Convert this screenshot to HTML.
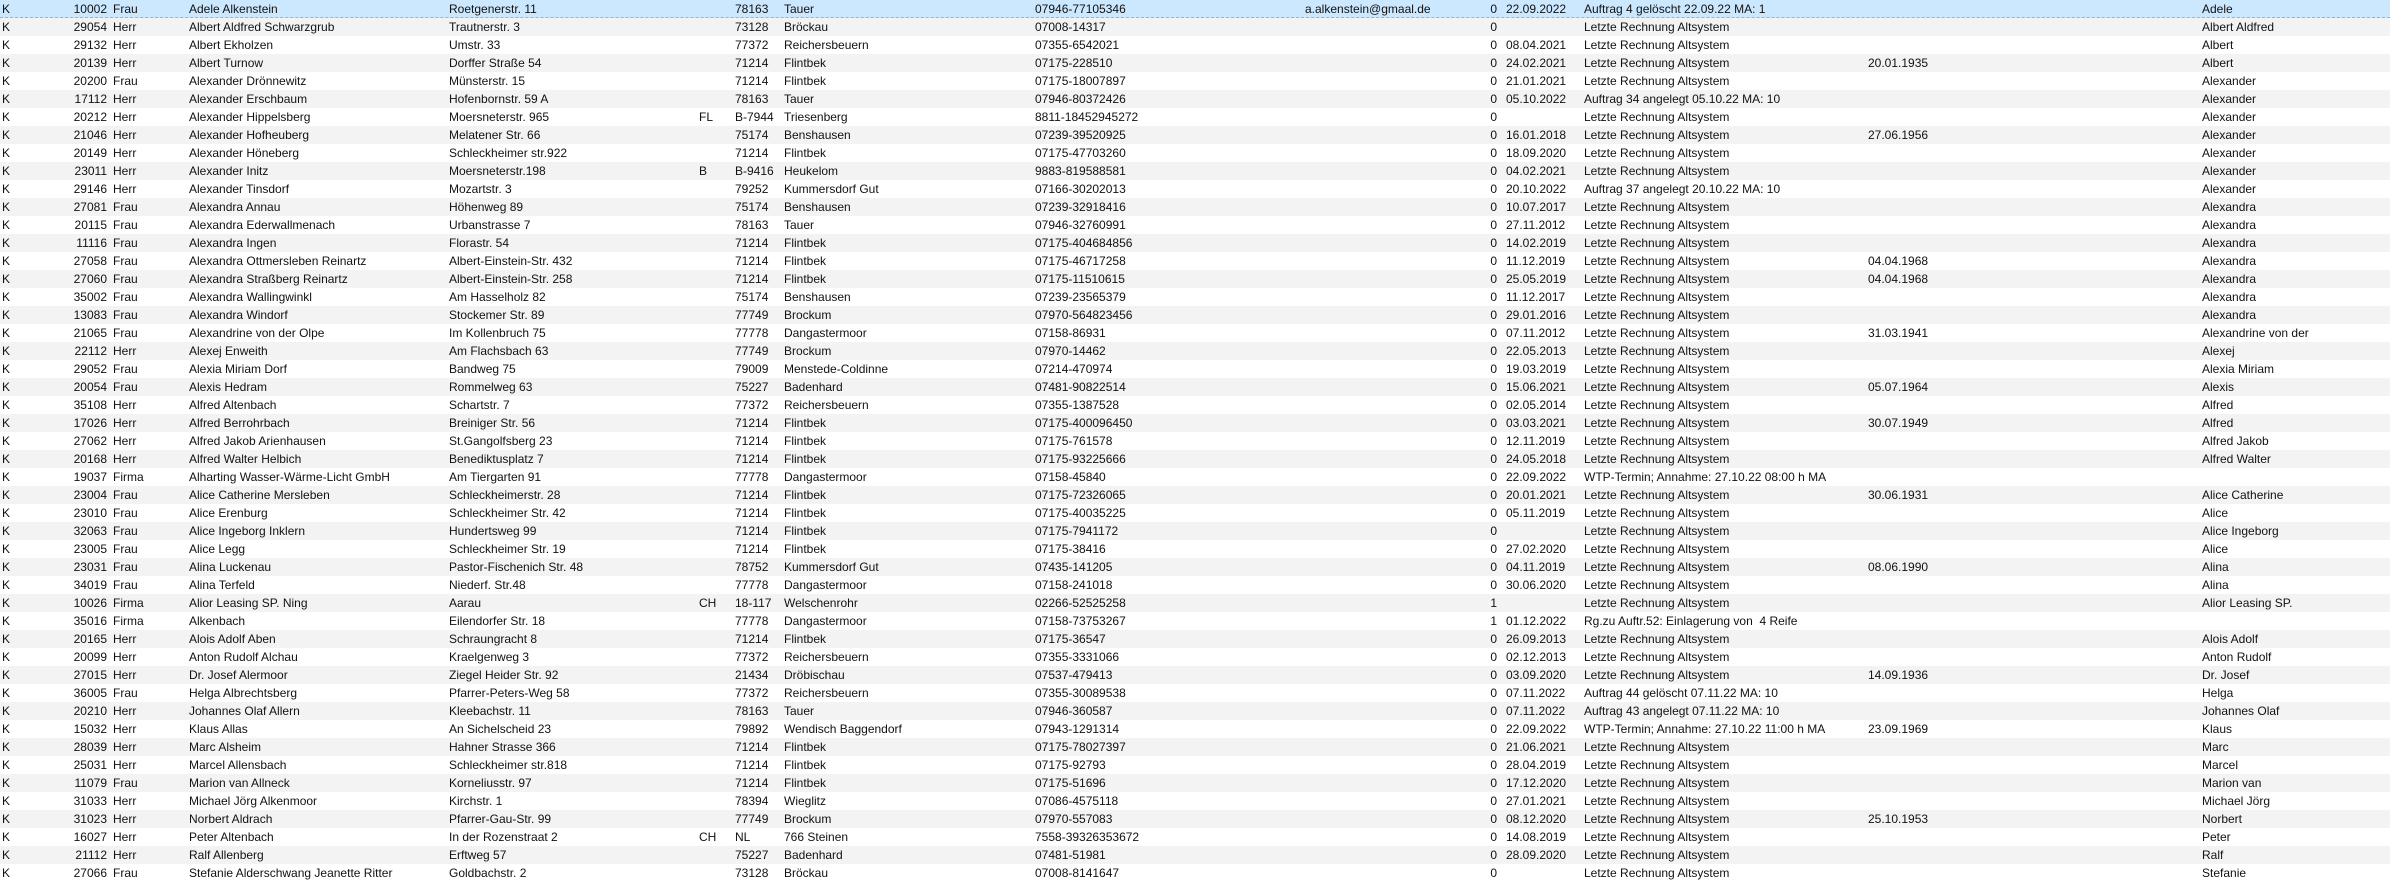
<!DOCTYPE html>
<html><head><meta charset="utf-8"><style>
body{margin:0;width:2390px;height:885px;overflow:hidden;background:#fff;font-family:"Segoe UI","Liberation Sans",sans-serif;font-size:12px;color:#111}
.r{position:relative;height:18px;line-height:18px;white-space:nowrap}
.r:nth-child(even){background:#f3f3f3}
.sel{background:#cce8ff!important;border-bottom:1px dashed #e8a060;height:17px}
.r span{position:absolute;top:0}
.a{left:2px}.b{left:57px;width:50px;text-align:right}.c{left:113px}.d{left:189px}.e{left:449px}.f{left:699px}.g{left:735px}.h{left:784px}.i{left:1035px}.j{left:1305px}.k{left:1470px;width:27px;text-align:right}.l{left:1506px}.m{left:1584px}.n{left:1868px}.o{left:2202px}
</style></head><body>
<div>
<div class="r sel"><span class="a">K</span><span class="b">10002</span><span class="c">Frau</span><span class="d">Adele Alkenstein</span><span class="e">Roetgenerstr. 11</span><span class="g">78163</span><span class="h">Tauer</span><span class="i">07946-77105346</span><span class="j">a.alkenstein@gmaal.de</span><span class="k">0</span><span class="l">22.09.2022</span><span class="m">Auftrag 4 gelöscht 22.09.22 MA: 1</span><span class="o">Adele</span></div>
<div class="r"><span class="a">K</span><span class="b">29054</span><span class="c">Herr</span><span class="d">Albert Aldfred Schwarzgrub</span><span class="e">Trautnerstr. 3</span><span class="g">73128</span><span class="h">Bröckau</span><span class="i">07008-14317</span><span class="k">0</span><span class="m">Letzte Rechnung Altsystem</span><span class="o">Albert Aldfred</span></div>
<div class="r"><span class="a">K</span><span class="b">29132</span><span class="c">Herr</span><span class="d">Albert Ekholzen</span><span class="e">Umstr. 33</span><span class="g">77372</span><span class="h">Reichersbeuern</span><span class="i">07355-6542021</span><span class="k">0</span><span class="l">08.04.2021</span><span class="m">Letzte Rechnung Altsystem</span><span class="o">Albert</span></div>
<div class="r"><span class="a">K</span><span class="b">20139</span><span class="c">Herr</span><span class="d">Albert Turnow</span><span class="e">Dorffer Straße 54</span><span class="g">71214</span><span class="h">Flintbek</span><span class="i">07175-228510</span><span class="k">0</span><span class="l">24.02.2021</span><span class="m">Letzte Rechnung Altsystem</span><span class="n">20.01.1935</span><span class="o">Albert</span></div>
<div class="r"><span class="a">K</span><span class="b">20200</span><span class="c">Frau</span><span class="d">Alexander Drönnewitz</span><span class="e">Münsterstr. 15</span><span class="g">71214</span><span class="h">Flintbek</span><span class="i">07175-18007897</span><span class="k">0</span><span class="l">21.01.2021</span><span class="m">Letzte Rechnung Altsystem</span><span class="o">Alexander</span></div>
<div class="r"><span class="a">K</span><span class="b">17112</span><span class="c">Herr</span><span class="d">Alexander Erschbaum</span><span class="e">Hofenbornstr. 59 A</span><span class="g">78163</span><span class="h">Tauer</span><span class="i">07946-80372426</span><span class="k">0</span><span class="l">05.10.2022</span><span class="m">Auftrag 34 angelegt 05.10.22 MA: 10</span><span class="o">Alexander</span></div>
<div class="r"><span class="a">K</span><span class="b">20212</span><span class="c">Herr</span><span class="d">Alexander Hippelsberg</span><span class="e">Moersneterstr. 965</span><span class="f">FL</span><span class="g">B-7944</span><span class="h">Triesenberg</span><span class="i">8811-18452945272</span><span class="k">0</span><span class="m">Letzte Rechnung Altsystem</span><span class="o">Alexander</span></div>
<div class="r"><span class="a">K</span><span class="b">21046</span><span class="c">Herr</span><span class="d">Alexander Hofheuberg</span><span class="e">Melatener Str. 66</span><span class="g">75174</span><span class="h">Benshausen</span><span class="i">07239-39520925</span><span class="k">0</span><span class="l">16.01.2018</span><span class="m">Letzte Rechnung Altsystem</span><span class="n">27.06.1956</span><span class="o">Alexander</span></div>
<div class="r"><span class="a">K</span><span class="b">20149</span><span class="c">Herr</span><span class="d">Alexander Höneberg</span><span class="e">Schleckheimer str.922</span><span class="g">71214</span><span class="h">Flintbek</span><span class="i">07175-47703260</span><span class="k">0</span><span class="l">18.09.2020</span><span class="m">Letzte Rechnung Altsystem</span><span class="o">Alexander</span></div>
<div class="r"><span class="a">K</span><span class="b">23011</span><span class="c">Herr</span><span class="d">Alexander Initz</span><span class="e">Moersneterstr.198</span><span class="f">B</span><span class="g">B-9416</span><span class="h">Heukelom</span><span class="i">9883-819588581</span><span class="k">0</span><span class="l">04.02.2021</span><span class="m">Letzte Rechnung Altsystem</span><span class="o">Alexander</span></div>
<div class="r"><span class="a">K</span><span class="b">29146</span><span class="c">Herr</span><span class="d">Alexander Tinsdorf</span><span class="e">Mozartstr. 3</span><span class="g">79252</span><span class="h">Kummersdorf Gut</span><span class="i">07166-30202013</span><span class="k">0</span><span class="l">20.10.2022</span><span class="m">Auftrag 37 angelegt 20.10.22 MA: 10</span><span class="o">Alexander</span></div>
<div class="r"><span class="a">K</span><span class="b">27081</span><span class="c">Frau</span><span class="d">Alexandra Annau</span><span class="e">Höhenweg 89</span><span class="g">75174</span><span class="h">Benshausen</span><span class="i">07239-32918416</span><span class="k">0</span><span class="l">10.07.2017</span><span class="m">Letzte Rechnung Altsystem</span><span class="o">Alexandra</span></div>
<div class="r"><span class="a">K</span><span class="b">20115</span><span class="c">Frau</span><span class="d">Alexandra Ederwallmenach</span><span class="e">Urbanstrasse 7</span><span class="g">78163</span><span class="h">Tauer</span><span class="i">07946-32760991</span><span class="k">0</span><span class="l">27.11.2012</span><span class="m">Letzte Rechnung Altsystem</span><span class="o">Alexandra</span></div>
<div class="r"><span class="a">K</span><span class="b">11116</span><span class="c">Frau</span><span class="d">Alexandra Ingen</span><span class="e">Florastr. 54</span><span class="g">71214</span><span class="h">Flintbek</span><span class="i">07175-404684856</span><span class="k">0</span><span class="l">14.02.2019</span><span class="m">Letzte Rechnung Altsystem</span><span class="o">Alexandra</span></div>
<div class="r"><span class="a">K</span><span class="b">27058</span><span class="c">Frau</span><span class="d">Alexandra Ottmersleben Reinartz</span><span class="e">Albert-Einstein-Str. 432</span><span class="g">71214</span><span class="h">Flintbek</span><span class="i">07175-46717258</span><span class="k">0</span><span class="l">11.12.2019</span><span class="m">Letzte Rechnung Altsystem</span><span class="n">04.04.1968</span><span class="o">Alexandra</span></div>
<div class="r"><span class="a">K</span><span class="b">27060</span><span class="c">Frau</span><span class="d">Alexandra Straßberg Reinartz</span><span class="e">Albert-Einstein-Str. 258</span><span class="g">71214</span><span class="h">Flintbek</span><span class="i">07175-11510615</span><span class="k">0</span><span class="l">25.05.2019</span><span class="m">Letzte Rechnung Altsystem</span><span class="n">04.04.1968</span><span class="o">Alexandra</span></div>
<div class="r"><span class="a">K</span><span class="b">35002</span><span class="c">Frau</span><span class="d">Alexandra Wallingwinkl</span><span class="e">Am Hasselholz 82</span><span class="g">75174</span><span class="h">Benshausen</span><span class="i">07239-23565379</span><span class="k">0</span><span class="l">11.12.2017</span><span class="m">Letzte Rechnung Altsystem</span><span class="o">Alexandra</span></div>
<div class="r"><span class="a">K</span><span class="b">13083</span><span class="c">Frau</span><span class="d">Alexandra Windorf</span><span class="e">Stockemer Str. 89</span><span class="g">77749</span><span class="h">Brockum</span><span class="i">07970-564823456</span><span class="k">0</span><span class="l">29.01.2016</span><span class="m">Letzte Rechnung Altsystem</span><span class="o">Alexandra</span></div>
<div class="r"><span class="a">K</span><span class="b">21065</span><span class="c">Frau</span><span class="d">Alexandrine von der Olpe</span><span class="e">Im Kollenbruch 75</span><span class="g">77778</span><span class="h">Dangastermoor</span><span class="i">07158-86931</span><span class="k">0</span><span class="l">07.11.2012</span><span class="m">Letzte Rechnung Altsystem</span><span class="n">31.03.1941</span><span class="o">Alexandrine von der</span></div>
<div class="r"><span class="a">K</span><span class="b">22112</span><span class="c">Herr</span><span class="d">Alexej Enweith</span><span class="e">Am Flachsbach 63</span><span class="g">77749</span><span class="h">Brockum</span><span class="i">07970-14462</span><span class="k">0</span><span class="l">22.05.2013</span><span class="m">Letzte Rechnung Altsystem</span><span class="o">Alexej</span></div>
<div class="r"><span class="a">K</span><span class="b">29052</span><span class="c">Frau</span><span class="d">Alexia Miriam Dorf</span><span class="e">Bandweg 75</span><span class="g">79009</span><span class="h">Menstede-Coldinne</span><span class="i">07214-470974</span><span class="k">0</span><span class="l">19.03.2019</span><span class="m">Letzte Rechnung Altsystem</span><span class="o">Alexia Miriam</span></div>
<div class="r"><span class="a">K</span><span class="b">20054</span><span class="c">Frau</span><span class="d">Alexis Hedram</span><span class="e">Rommelweg 63</span><span class="g">75227</span><span class="h">Badenhard</span><span class="i">07481-90822514</span><span class="k">0</span><span class="l">15.06.2021</span><span class="m">Letzte Rechnung Altsystem</span><span class="n">05.07.1964</span><span class="o">Alexis</span></div>
<div class="r"><span class="a">K</span><span class="b">35108</span><span class="c">Herr</span><span class="d">Alfred Altenbach</span><span class="e">Schartstr. 7</span><span class="g">77372</span><span class="h">Reichersbeuern</span><span class="i">07355-1387528</span><span class="k">0</span><span class="l">02.05.2014</span><span class="m">Letzte Rechnung Altsystem</span><span class="o">Alfred</span></div>
<div class="r"><span class="a">K</span><span class="b">17026</span><span class="c">Herr</span><span class="d">Alfred Berrohrbach</span><span class="e">Breiniger Str. 56</span><span class="g">71214</span><span class="h">Flintbek</span><span class="i">07175-400096450</span><span class="k">0</span><span class="l">03.03.2021</span><span class="m">Letzte Rechnung Altsystem</span><span class="n">30.07.1949</span><span class="o">Alfred</span></div>
<div class="r"><span class="a">K</span><span class="b">27062</span><span class="c">Herr</span><span class="d">Alfred Jakob Arienhausen</span><span class="e">St.Gangolfsberg 23</span><span class="g">71214</span><span class="h">Flintbek</span><span class="i">07175-761578</span><span class="k">0</span><span class="l">12.11.2019</span><span class="m">Letzte Rechnung Altsystem</span><span class="o">Alfred Jakob</span></div>
<div class="r"><span class="a">K</span><span class="b">20168</span><span class="c">Herr</span><span class="d">Alfred Walter Helbich</span><span class="e">Benediktusplatz 7</span><span class="g">71214</span><span class="h">Flintbek</span><span class="i">07175-93225666</span><span class="k">0</span><span class="l">24.05.2018</span><span class="m">Letzte Rechnung Altsystem</span><span class="o">Alfred Walter</span></div>
<div class="r"><span class="a">K</span><span class="b">19037</span><span class="c">Firma</span><span class="d">Alharting Wasser-Wärme-Licht GmbH</span><span class="e">Am Tiergarten 91</span><span class="g">77778</span><span class="h">Dangastermoor</span><span class="i">07158-45840</span><span class="k">0</span><span class="l">22.09.2022</span><span class="m">WTP-Termin; Annahme: 27.10.22 08:00 h MA</span></div>
<div class="r"><span class="a">K</span><span class="b">23004</span><span class="c">Frau</span><span class="d">Alice Catherine Mersleben</span><span class="e">Schleckheimerstr. 28</span><span class="g">71214</span><span class="h">Flintbek</span><span class="i">07175-72326065</span><span class="k">0</span><span class="l">20.01.2021</span><span class="m">Letzte Rechnung Altsystem</span><span class="n">30.06.1931</span><span class="o">Alice Catherine</span></div>
<div class="r"><span class="a">K</span><span class="b">23010</span><span class="c">Frau</span><span class="d">Alice Erenburg</span><span class="e">Schleckheimer Str. 42</span><span class="g">71214</span><span class="h">Flintbek</span><span class="i">07175-40035225</span><span class="k">0</span><span class="l">05.11.2019</span><span class="m">Letzte Rechnung Altsystem</span><span class="o">Alice</span></div>
<div class="r"><span class="a">K</span><span class="b">32063</span><span class="c">Frau</span><span class="d">Alice Ingeborg Inklern</span><span class="e">Hundertsweg 99</span><span class="g">71214</span><span class="h">Flintbek</span><span class="i">07175-7941172</span><span class="k">0</span><span class="m">Letzte Rechnung Altsystem</span><span class="o">Alice Ingeborg</span></div>
<div class="r"><span class="a">K</span><span class="b">23005</span><span class="c">Frau</span><span class="d">Alice Legg</span><span class="e">Schleckheimer Str. 19</span><span class="g">71214</span><span class="h">Flintbek</span><span class="i">07175-38416</span><span class="k">0</span><span class="l">27.02.2020</span><span class="m">Letzte Rechnung Altsystem</span><span class="o">Alice</span></div>
<div class="r"><span class="a">K</span><span class="b">23031</span><span class="c">Frau</span><span class="d">Alina Luckenau</span><span class="e">Pastor-Fischenich Str. 48</span><span class="g">78752</span><span class="h">Kummersdorf Gut</span><span class="i">07435-141205</span><span class="k">0</span><span class="l">04.11.2019</span><span class="m">Letzte Rechnung Altsystem</span><span class="n">08.06.1990</span><span class="o">Alina</span></div>
<div class="r"><span class="a">K</span><span class="b">34019</span><span class="c">Frau</span><span class="d">Alina Terfeld</span><span class="e">Niederf. Str.48</span><span class="g">77778</span><span class="h">Dangastermoor</span><span class="i">07158-241018</span><span class="k">0</span><span class="l">30.06.2020</span><span class="m">Letzte Rechnung Altsystem</span><span class="o">Alina</span></div>
<div class="r"><span class="a">K</span><span class="b">10026</span><span class="c">Firma</span><span class="d">Alior Leasing SP. Ning</span><span class="e">Aarau</span><span class="f">CH</span><span class="g">18-117</span><span class="h">Welschenrohr</span><span class="i">02266-52525258</span><span class="k">1</span><span class="m">Letzte Rechnung Altsystem</span><span class="o">Alior Leasing SP.</span></div>
<div class="r"><span class="a">K</span><span class="b">35016</span><span class="c">Firma</span><span class="d">Alkenbach</span><span class="e">Eilendorfer Str. 18</span><span class="g">77778</span><span class="h">Dangastermoor</span><span class="i">07158-73753267</span><span class="k">1</span><span class="l">01.12.2022</span><span class="m">Rg.zu Auftr.52: Einlagerung von&nbsp; 4 Reife</span></div>
<div class="r"><span class="a">K</span><span class="b">20165</span><span class="c">Herr</span><span class="d">Alois Adolf Aben</span><span class="e">Schraungracht 8</span><span class="g">71214</span><span class="h">Flintbek</span><span class="i">07175-36547</span><span class="k">0</span><span class="l">26.09.2013</span><span class="m">Letzte Rechnung Altsystem</span><span class="o">Alois Adolf</span></div>
<div class="r"><span class="a">K</span><span class="b">20099</span><span class="c">Herr</span><span class="d">Anton Rudolf Alchau</span><span class="e">Kraelgenweg 3</span><span class="g">77372</span><span class="h">Reichersbeuern</span><span class="i">07355-3331066</span><span class="k">0</span><span class="l">02.12.2013</span><span class="m">Letzte Rechnung Altsystem</span><span class="o">Anton Rudolf</span></div>
<div class="r"><span class="a">K</span><span class="b">27015</span><span class="c">Herr</span><span class="d">Dr. Josef Alermoor</span><span class="e">Ziegel Heider Str. 92</span><span class="g">21434</span><span class="h">Dröbischau</span><span class="i">07537-479413</span><span class="k">0</span><span class="l">03.09.2020</span><span class="m">Letzte Rechnung Altsystem</span><span class="n">14.09.1936</span><span class="o">Dr. Josef</span></div>
<div class="r"><span class="a">K</span><span class="b">36005</span><span class="c">Frau</span><span class="d">Helga Albrechtsberg</span><span class="e">Pfarrer-Peters-Weg 58</span><span class="g">77372</span><span class="h">Reichersbeuern</span><span class="i">07355-30089538</span><span class="k">0</span><span class="l">07.11.2022</span><span class="m">Auftrag 44 gelöscht 07.11.22 MA: 10</span><span class="o">Helga</span></div>
<div class="r"><span class="a">K</span><span class="b">20210</span><span class="c">Herr</span><span class="d">Johannes Olaf Allern</span><span class="e">Kleebachstr. 11</span><span class="g">78163</span><span class="h">Tauer</span><span class="i">07946-360587</span><span class="k">0</span><span class="l">07.11.2022</span><span class="m">Auftrag 43 angelegt 07.11.22 MA: 10</span><span class="o">Johannes Olaf</span></div>
<div class="r"><span class="a">K</span><span class="b">15032</span><span class="c">Herr</span><span class="d">Klaus Allas</span><span class="e">An Sichelscheid 23</span><span class="g">79892</span><span class="h">Wendisch Baggendorf</span><span class="i">07943-1291314</span><span class="k">0</span><span class="l">22.09.2022</span><span class="m">WTP-Termin; Annahme: 27.10.22 11:00 h MA</span><span class="n">23.09.1969</span><span class="o">Klaus</span></div>
<div class="r"><span class="a">K</span><span class="b">28039</span><span class="c">Herr</span><span class="d">Marc Alsheim</span><span class="e">Hahner Strasse 366</span><span class="g">71214</span><span class="h">Flintbek</span><span class="i">07175-78027397</span><span class="k">0</span><span class="l">21.06.2021</span><span class="m">Letzte Rechnung Altsystem</span><span class="o">Marc</span></div>
<div class="r"><span class="a">K</span><span class="b">25031</span><span class="c">Herr</span><span class="d">Marcel Allensbach</span><span class="e">Schleckheimer str.818</span><span class="g">71214</span><span class="h">Flintbek</span><span class="i">07175-92793</span><span class="k">0</span><span class="l">28.04.2019</span><span class="m">Letzte Rechnung Altsystem</span><span class="o">Marcel</span></div>
<div class="r"><span class="a">K</span><span class="b">11079</span><span class="c">Frau</span><span class="d">Marion van Allneck</span><span class="e">Korneliusstr. 97</span><span class="g">71214</span><span class="h">Flintbek</span><span class="i">07175-51696</span><span class="k">0</span><span class="l">17.12.2020</span><span class="m">Letzte Rechnung Altsystem</span><span class="o">Marion van</span></div>
<div class="r"><span class="a">K</span><span class="b">31033</span><span class="c">Herr</span><span class="d">Michael Jörg Alkenmoor</span><span class="e">Kirchstr. 1</span><span class="g">78394</span><span class="h">Wieglitz</span><span class="i">07086-4575118</span><span class="k">0</span><span class="l">27.01.2021</span><span class="m">Letzte Rechnung Altsystem</span><span class="o">Michael Jörg</span></div>
<div class="r"><span class="a">K</span><span class="b">31023</span><span class="c">Herr</span><span class="d">Norbert Aldrach</span><span class="e">Pfarrer-Gau-Str. 99</span><span class="g">77749</span><span class="h">Brockum</span><span class="i">07970-557083</span><span class="k">0</span><span class="l">08.12.2020</span><span class="m">Letzte Rechnung Altsystem</span><span class="n">25.10.1953</span><span class="o">Norbert</span></div>
<div class="r"><span class="a">K</span><span class="b">16027</span><span class="c">Herr</span><span class="d">Peter Altenbach</span><span class="e">In der Rozenstraat 2</span><span class="f">CH</span><span class="g">NL</span><span class="h">766 Steinen</span><span class="i">7558-39326353672</span><span class="k">0</span><span class="l">14.08.2019</span><span class="m">Letzte Rechnung Altsystem</span><span class="o">Peter</span></div>
<div class="r"><span class="a">K</span><span class="b">21112</span><span class="c">Herr</span><span class="d">Ralf Allenberg</span><span class="e">Erftweg 57</span><span class="g">75227</span><span class="h">Badenhard</span><span class="i">07481-51981</span><span class="k">0</span><span class="l">28.09.2020</span><span class="m">Letzte Rechnung Altsystem</span><span class="o">Ralf</span></div>
<div class="r"><span class="a">K</span><span class="b">27066</span><span class="c">Frau</span><span class="d">Stefanie Alderschwang Jeanette Ritter</span><span class="e">Goldbachstr. 2</span><span class="g">73128</span><span class="h">Bröckau</span><span class="i">07008-8141647</span><span class="k">0</span><span class="m">Letzte Rechnung Altsystem</span><span class="o">Stefanie</span></div>
</div>
</body></html>
